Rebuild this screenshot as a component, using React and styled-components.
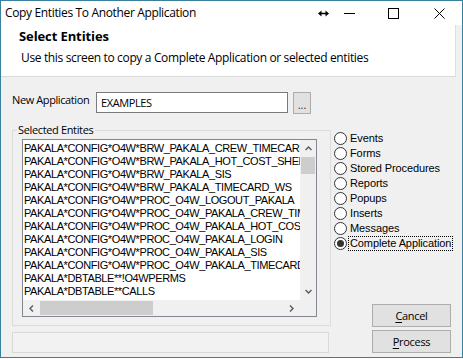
import React from 'react'
import styled, { createGlobalStyle } from 'styled-components'

const GlobalStyle = createGlobalStyle`
  html, body {
    margin: 0;
    padding: 0;
    background: #fff;
  }
  body {
    font-family: "Open Sans", "Noto Sans", sans-serif;
    color: #000;
  }
`

const Window = styled.div`
  width: 463px;
  height: 358px;
  box-sizing: border-box;
  border: 1px solid #3b7f9f;
  background: #f0f0f0;
  display: flex;
  flex-direction: column;
  overflow: hidden;
`

const TitleBar = styled.div`
  height: 24px;
  flex-shrink: 0;
  background: #fff;
  display: flex;
  align-items: center;
  padding-left: 4px;
`

const Title = styled.span`
  flex: 1;
  font-size: 12px;
  letter-spacing: -0.35px;
  line-height: 16px;
`

const CaptionButton = styled.div`
  width: ${p => p.$w || 46}px;
  height: 24px;
  display: flex;
  align-items: center;
  justify-content: center;
`

const Header = styled.div`
  height: 52px;
  flex-shrink: 0;
  box-sizing: border-box;
  background: #fff;
  border-bottom: 1px solid #d9d9d9;
  border-right: 1px solid #dedede;
  margin-right: 6px;
  padding: 2px 0 0 18px;
`

const HeaderTitle = styled.div`
  font-size: 13px;
  font-weight: 700;
  line-height: 18px;
  letter-spacing: -0.1px;
`

const HeaderText = styled.div`
  font-size: 12px;
  line-height: 16px;
  letter-spacing: -0.35px;
  margin: 5px 0 0 2px;
`

const Body = styled.div`
  flex: 1;
  display: flex;
  flex-direction: column;
  padding: 15px 0 0 11px;
`

const FieldRow = styled.div`
  display: flex;
  align-items: flex-start;
  height: 22px;
`

const FieldLabel = styled.span`
  width: 84px;
  font-size: 11px;
  line-height: 16px;
  letter-spacing: -0.4px;
`

const TextBox = styled.div`
  width: 192px;
  height: 21px;
  box-sizing: border-box;
  border: 1px solid #7a7a7a;
  background: #fff;
  padding-left: 4px;
  font-size: 11px;
  line-height: 19px;
  letter-spacing: -0.4px;
`

const BrowseButton = styled.div`
  width: 18px;
  height: 22px;
  box-sizing: border-box;
  margin-left: 5px;
  background: #e1e1e1;
  border: 1px solid #adadad;
  font-size: 11px;
  line-height: 24px;
  text-align: center;
  color: #333;
`

const MainRow = styled.div`
  display: flex;
  margin-top: 9px;
`

const LeftColumn = styled.div`
  width: 319px;
  display: flex;
  flex-direction: column;
`

const GroupBox = styled.fieldset`
  margin: 0;
  padding: 0;
  border: 1px solid #dcdcdc;
  min-width: 0;
`

const GroupLegend = styled.legend`
  margin-left: 4px;
  padding: 0 2px 0 1px;
  font-size: 11px;
  line-height: 14px;
  letter-spacing: -0.35px;
`

const ListBox = styled.div`
  width: 295px;
  height: 178px;
  box-sizing: border-box;
  margin: 2px 13px 8px 9px;
  border: 1px solid #828790;
  background: #fff;
  display: grid;
  grid-template-columns: 1fr 16px;
  grid-template-rows: 1fr 16px;
`

const ListItems = styled.div`
  overflow: hidden;
  padding: 2px 0 0 1px;
`

const ListItem = styled.div`
  font-family: "Liberation Sans", Arial, sans-serif;
  font-size: 11px;
  line-height: 13px;
  white-space: nowrap;
  letter-spacing: -0.4px;
`

const ScrollV = styled.div`
  background: #f0f0f0;
  display: flex;
  flex-direction: column;
`

const ScrollH = styled.div`
  background: #f0f0f0;
  display: flex;
`

const ScrollArrow = styled.div`
  width: ${p => p.$w}px;
  height: ${p => p.$h}px;
  flex-shrink: 0;
  display: flex;
  align-items: center;
  justify-content: center;
`

const ThumbV = styled.div`
  height: 17px;
  margin: 0 1px;
  background: #cdcdcd;
`

const ThumbH = styled.div`
  width: 113px;
  margin: 1px 0;
  background: #cdcdcd;
`

const Track = styled.div`
  flex: 1;
`

const Corner = styled.div`
  background: #f0f0f0;
`

const StatusBox = styled.div`
  width: 317px;
  height: 21px;
  box-sizing: border-box;
  margin-top: 6px;
  border: 1px solid #d9d9d9;
  background: #f2f2f2;
`

const RightColumn = styled.div`
  flex: 1;
  display: flex;
  flex-direction: column;
  margin-left: 3px;
  padding-top: 8px;
`

const RadioRow = styled.div`
  height: 15px;
  display: flex;
  align-items: center;
`

const RadioCircle = styled.span`
  width: 13px;
  height: 13px;
  box-sizing: border-box;
  border: 1px solid #333;
  border-radius: 50%;
  background: #fff;
  display: flex;
  align-items: center;
  justify-content: center;
  &::after {
    content: '';
    width: 7px;
    height: 7px;
    border-radius: 50%;
    background: ${p => (p.$checked ? '#333' : 'transparent')};
  }
`

const RadioLabel = styled.span`
  margin-left: 1px;
  padding: 0 1px;
  border: 1px dotted ${p => (p.$focus ? '#000' : 'transparent')};
  font-family: "Liberation Sans", Arial, sans-serif;
  font-size: 11px;
  line-height: 13px;
  letter-spacing: -0.1px;
  white-space: nowrap;
`

const Buttons = styled.div`
  margin-top: auto;
  margin-left: 38px;
  display: flex;
  flex-direction: column;
  gap: 3px;
`

const Button = styled.div`
  width: 79px;
  height: 23px;
  box-sizing: border-box;
  background: #e1e1e1;
  border: 1px solid #adadad;
  font-size: 11px;
  line-height: 21px;
  letter-spacing: -0.3px;
  text-align: center;
  u {
    text-decoration-thickness: 1px;
    text-underline-offset: 2px;
  }
`

const entities = [
  'PAKALA*CONFIG*O4W*BRW_PAKALA_CREW_TIMECARD',
  'PAKALA*CONFIG*O4W*BRW_PAKALA_HOT_COST_SHEET',
  'PAKALA*CONFIG*O4W*BRW_PAKALA_SIS',
  'PAKALA*CONFIG*O4W*BRW_PAKALA_TIMECARD_WS',
  'PAKALA*CONFIG*O4W*PROC_O4W_LOGOUT_PAKALA',
  'PAKALA*CONFIG*O4W*PROC_O4W_PAKALA_CREW_TIMECARD',
  'PAKALA*CONFIG*O4W*PROC_O4W_PAKALA_HOT_COST_SHEET',
  'PAKALA*CONFIG*O4W*PROC_O4W_PAKALA_LOGIN',
  'PAKALA*CONFIG*O4W*PROC_O4W_PAKALA_SIS',
  'PAKALA*CONFIG*O4W*PROC_O4W_PAKALA_TIMECARD_WS',
  'PAKALA*DBTABLE**!O4WPERMS',
  'PAKALA*DBTABLE**CALLS',
  'PAKALA*DBTABLE**CONTACTS',
]

const options = [
  'Events',
  'Forms',
  'Stored Procedures',
  'Reports',
  'Popups',
  'Inserts',
  'Messages',
  'Complete Application',
]

const Chevron = ({ dir }) => {
  const pts = {
    up: '0.5,4 3.5,1 6.5,4',
    down: '0.5,1 3.5,4 6.5,1',
    left: '4,0.5 1,3.5 4,6.5',
    right: '1,0.5 4,3.5 1,6.5',
  }[dir]
  const vertical = dir === 'up' || dir === 'down'
  return (
    <svg width={vertical ? 7 : 5} height={vertical ? 5 : 7}>
      <polyline points={pts} fill="none" stroke="#606060" strokeWidth="1.5" />
    </svg>
  )
}

const App = () => {
  return (
    <>
      <GlobalStyle />
      <Window>
        <TitleBar>
          <Title>Copy Entities To Another Application</Title>
          <CaptionButton $w={12}>
            <svg width="11" height="7">
              <line x1="2" y1="3.5" x2="9" y2="3.5" stroke="#000" strokeWidth="1.5" />
              <polygon points="0,3.5 3.5,0.5 3.5,6.5" fill="#000" />
              <polygon points="11,3.5 7.5,0.5 7.5,6.5" fill="#000" />
            </svg>
          </CaptionButton>
          <CaptionButton $w={41}>
            <svg width="11" height="1">
              <line x1="0" y1="0.5" x2="11" y2="0.5" stroke="#000" />
            </svg>
          </CaptionButton>
          <CaptionButton>
            <svg width="11" height="11">
              <rect x="0.5" y="0.5" width="10" height="10" fill="none" stroke="#000" />
            </svg>
          </CaptionButton>
          <CaptionButton>
            <svg width="11" height="11">
              <path d="M0.5 0.5 L10.5 10.5 M10.5 0.5 L0.5 10.5" stroke="#000" />
            </svg>
          </CaptionButton>
        </TitleBar>

        <Header>
          <HeaderTitle>Select Entities</HeaderTitle>
          <HeaderText>Use this screen to copy a Complete Application or selected entities</HeaderText>
        </Header>

        <Body>
          <FieldRow>
            <FieldLabel>New Application</FieldLabel>
            <TextBox>EXAMPLES</TextBox>
            <BrowseButton>...</BrowseButton>
          </FieldRow>

          <MainRow>
            <LeftColumn>
              <GroupBox>
                <GroupLegend>Selected Entites</GroupLegend>
                <ListBox>
                  <ListItems>
                    {entities.map(e => (
                      <ListItem key={e}>{e}</ListItem>
                    ))}
                  </ListItems>
                  <ScrollV>
                    <ScrollArrow $w={16} $h={17}><Chevron dir="up" /></ScrollArrow>
                    <ThumbV />
                    <Track />
                    <ScrollArrow $w={16} $h={17}><Chevron dir="down" /></ScrollArrow>
                  </ScrollV>
                  <ScrollH>
                    <ScrollArrow $w={17} $h={16}><Chevron dir="left" /></ScrollArrow>
                    <ThumbH />
                    <Track />
                    <ScrollArrow $w={17} $h={16}><Chevron dir="right" /></ScrollArrow>
                  </ScrollH>
                  <Corner />
                </ListBox>
              </GroupBox>
              <StatusBox />
            </LeftColumn>

            <RightColumn>
              {options.map(o => (
                <RadioRow key={o}>
                  <RadioCircle $checked={o === 'Complete Application'} />
                  <RadioLabel $focus={o === 'Complete Application'}>{o}</RadioLabel>
                </RadioRow>
              ))}
              <Buttons>
                <Button><u>C</u>ancel</Button>
                <Button><u>P</u>rocess</Button>
              </Buttons>
            </RightColumn>
          </MainRow>
        </Body>
      </Window>
    </>
  )
}

export default App
